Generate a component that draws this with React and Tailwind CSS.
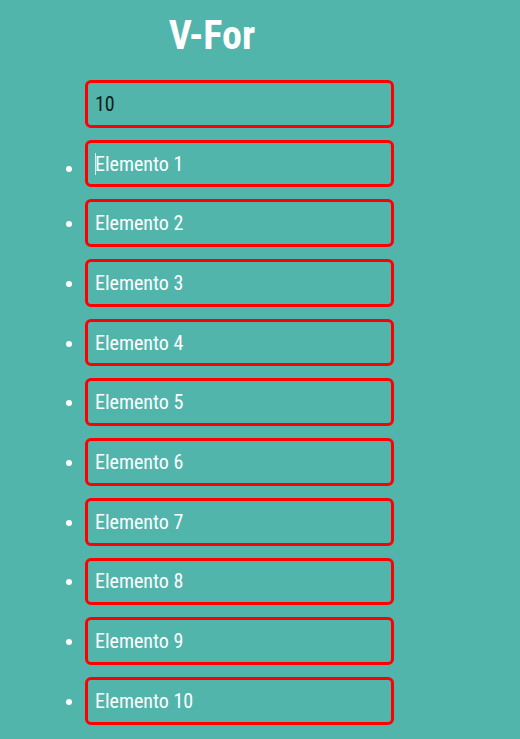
import React from "react";

export default function App() {
  const items = Array.from({ length: 10 }, (_, i) => `Elemento ${i + 1}`);
  return (
    <div
      className="min-h-screen bg-[#51b5ac] font-['Roboto_Condensed',Roboto,sans-serif] font-stretch-[87.5%] overflow-hidden"
    >
      <h1 className="w-[424px] pt-[16px] text-center text-[40px] leading-none font-bold text-white">
        V-For
      </h1>
      <div className="pl-[85px] pt-[24px]">
        <div className="flex h-[47.7px] w-[309px] items-center rounded-[6px] border-[3px] border-[#ff0000] pl-[7px] text-[20px] text-[#0a1a1a]">
          10
        </div>
      </div>
      <ul className="mt-[12px] flex list-disc flex-col gap-[12px] pl-[85px] text-white marker:text-white">
        {items.map((t, i) => (
          <li key={t} className="text-[20px]">
            <div className="flex h-[47.7px] w-[309px] items-center rounded-[6px] border-[3px] border-[#ff0000] pl-[7px] text-white">
              {i === 0 && <span className="mr-[-1px] inline-block h-[22px] w-px bg-[#d8eeee]" />}
              {t}
            </div>
          </li>
        ))}
      </ul>
    </div>
  );
}
